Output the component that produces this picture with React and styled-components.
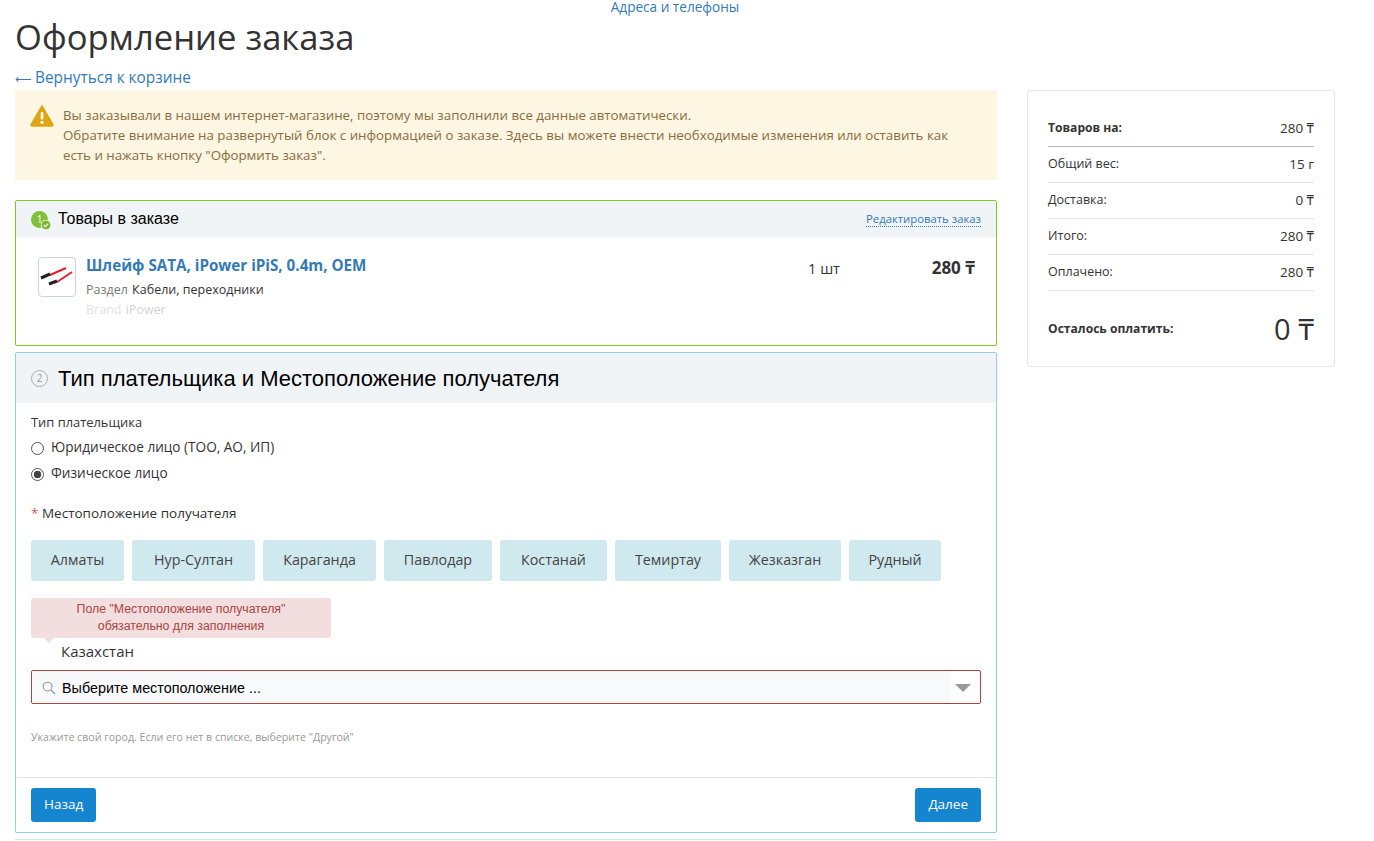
import React from 'react'
import styled, { createGlobalStyle } from 'styled-components'

const font = '"Open Sans", "Noto Sans", sans-serif'
const arial = '"Liberation Sans", Arial, sans-serif'

const cities = [
  { name: 'Алматы', width: 93 },
  { name: 'Нур-Султан', width: 123 },
  { name: 'Караганда', width: 113 },
  { name: 'Павлодар', width: 108 },
  { name: 'Костанай', width: 107 },
  { name: 'Темиртау', width: 106 },
  { name: 'Жезказган', width: 112 },
  { name: 'Рудный', width: 92 }
]

const totals = [
  { label: 'Товаров на:', value: '280 ₸', strong: true },
  { label: 'Общий вес:', value: '15 г' },
  { label: 'Доставка:', value: '0 ₸' },
  { label: 'Итого:', value: '280 ₸' },
  { label: 'Оплачено:', value: '280 ₸' }
]

export default function App() {
  return (
    <Page>
      <GlobalStyle />
      <TopLink>Адреса и телефоны</TopLink>
      <Title>Оформление заказа</Title>
      <BackLink>
        <i>⟵</i>Вернуться к корзине
      </BackLink>
      <Columns>
        <Main>
          <Alert>
            <svg width="24" height="22" viewBox="0 0 24 22">
              <path d="M12 1 L23 20 Q23 21 22 21 L2 21 Q1 21 1 20 Z" fill="#dfa512" stroke="#dfa512" strokeWidth="1.5" strokeLinejoin="round" />
              <rect x="10.7" y="7" width="2.6" height="7.5" rx="1" fill="#fff" />
              <circle cx="12" cy="17.3" r="1.6" fill="#fff" />
            </svg>
            <p>
              Вы заказывали в нашем интернет-магазине, поэтому мы заполнили все данные автоматически.
              <br />
              Обратите внимание на развернутый блок с информацией о заказе. Здесь вы можете внести необходимые изменения или оставить как есть и нажать кнопку "Оформить заказ".
            </p>
          </Alert>

          <Panel $color="#82c91e">
            <PanelHead $h={36}>
              <StepDone>
                1
                <svg width="10" height="10" viewBox="0 0 10 10">
                  <circle cx="5" cy="5" r="5" fill="#7ab833" stroke="#fff" strokeWidth="1" />
                  <path d="M2.8 5 L4.4 6.6 L7.2 3.6" fill="none" stroke="#fff" strokeWidth="1.2" />
                </svg>
              </StepDone>
              <SmallHeading>Товары в заказе</SmallHeading>
              <EditLink>Редактировать заказ</EditLink>
            </PanelHead>
            <Product>
              <Thumb>
                <svg width="36" height="38" viewBox="0 0 36 38">
                  <path d="M11 17 L27 10 M18 24 L33 14" stroke="#e4202e" strokeWidth="2" />
                  <path d="M2 20 L11 16 M10 26 L18 23" stroke="#222" strokeWidth="3.2" />
                </svg>
              </Thumb>
              <Info>
                <ProductName>Шлейф SATA, iPower iPiS, 0.4m, OEM</ProductName>
                <Prop>
                  <span>Раздел</span> Кабели, переходники
                </Prop>
                <Prop $faded>
                  <span>Brand</span> iPower
                </Prop>
              </Info>
              <Qty>1 шт</Qty>
              <Price>280 ₸</Price>
            </Product>
          </Panel>

          <Panel $color="#8fd0e2">
            <PanelHead $h={50}>
              <Step>2</Step>
              <BigHeading>Тип плательщика и Местоположение получателя</BigHeading>
            </PanelHead>
            <Form>
              <FieldLabel>Тип плательщика</FieldLabel>
              <RadioGroup>
                <RadioRow>
                  <Radio />
                  Юридическое лицо (ТОО, АО, ИП)
                </RadioRow>
                <RadioRow>
                  <Radio $checked />
                  Физическое лицо
                </RadioRow>
              </RadioGroup>
              <RequiredLabel>
                <i>*</i> Местоположение получателя
              </RequiredLabel>
              <Cities>
                {cities.map(city => (
                  <City key={city.name} $w={city.width}>
                    {city.name}
                  </City>
                ))}
              </Cities>
              <Tooltip>
                Поле "Местоположение получателя"
                <br />
                обязательно для заполнения
              </Tooltip>
              <Country>Казахстан</Country>
              <Select>
                <SelectInput>
                  <svg width="14" height="14" viewBox="0 0 14 14">
                    <circle cx="5.6" cy="5.6" r="4.4" fill="none" stroke="#999" strokeWidth="1.1" />
                    <path d="M9 9 L13 13" stroke="#999" strokeWidth="1.3" />
                  </svg>
                  Выберите местоположение ...
                </SelectInput>
                <Caret />
              </Select>
              <Hint>Укажите свой город. Если его нет в списке, выберите "Другой"</Hint>
            </Form>
            <PanelFoot>
              <Button>Назад</Button>
              <Button>Далее</Button>
            </PanelFoot>
          </Panel>
          <NextPanel />
        </Main>

        <Aside>
          {totals.map(row => (
            <TotalRow key={row.label} $strong={row.strong}>
              <TotalLabel $strong={row.strong}>{row.label}</TotalLabel>
              <span>{row.value}</span>
            </TotalRow>
          ))}
          <DueRow>
            <TotalLabel $strong>Осталось оплатить:</TotalLabel>
            <DueValue>0 ₸</DueValue>
          </DueRow>
        </Aside>
      </Columns>
    </Page>
  )
}

const GlobalStyle = createGlobalStyle`
  html, body {
    margin: 0;
    height: 841px;
    overflow: hidden;
    background: #fff;
  }

  body {
    font-family: ${font};
    font-size: 13px;
    color: #333;
  }

  p {
    margin: 0;
  }
`

const Page = styled.div`
  padding: 0 39px 0 15px;
`

const TopLink = styled.a`
  display: block;
  height: 14px;
  line-height: 13px;
  text-align: center;
  font-size: 13.6px;
  color: #337ab7;
`

const Title = styled.h1`
  margin: 0;
  height: 47px;
  line-height: 46px;
  font-size: 34.6px;
  font-weight: 400;
  color: #333;
`

const BackLink = styled.a`
  display: block;
  margin-top: 6px;
  height: 23px;
  line-height: 22px;
  font-size: 15.4px;
  color: #337ab7;

  i {
    display: inline-block;
    width: 20px;
    font-family: "DejaVu Sans", sans-serif;
    font-size: 11.5px;
    font-style: normal;
  }
`

const Columns = styled.div`
  display: flex;
  gap: 30px;
  align-items: flex-start;
`

const Main = styled.main`
  width: 982px;
  flex: none;
`

const Alert = styled.div`
  display: flex;
  gap: 9px;
  height: 90px;
  box-sizing: border-box;
  padding: 15px 30px 0 15px;
  margin-bottom: 20px;
  background: #fcf6e3;
  color: #8a6d3b;
  font-size: 13.3px;
  line-height: 20px;

  svg {
    flex: none;
  }
`

const Panel = styled.section`
  border: 1px solid ${p => p.$color};
  border-radius: 2px;
  margin-bottom: 6px;
`

const PanelHead = styled.header`
  display: flex;
  align-items: center;
  height: ${p => p.$h}px;
  padding: 0 15px;
  background: #f1f4f7;
`

const StepDone = styled.span`
  position: relative;
  display: flex;
  align-items: center;
  justify-content: center;
  width: 17px;
  height: 17px;
  margin-right: 10px;
  border-radius: 50%;
  background: #82bf3a;
  color: #fff;
  font-size: 10px;

  svg {
    position: absolute;
    right: -3px;
    bottom: -2px;
  }
`

const Step = styled.span`
  display: flex;
  align-items: center;
  justify-content: center;
  box-sizing: border-box;
  width: 17px;
  height: 17px;
  margin-right: 10px;
  border: 1px solid #aaa;
  border-radius: 50%;
  color: #999;
  font-size: 10px;
`

const SmallHeading = styled.h3`
  margin: 0;
  flex: 1;
  font-family: ${arial};
  font-size: 16px;
  font-weight: 400;
  color: #000;
`

const BigHeading = styled.h2`
  margin: 0;
  padding-top: 1px;
  font-family: ${arial};
  font-size: 22px;
  font-weight: 400;
  color: #000;
`

const EditLink = styled.a`
  font-size: 11.3px;
  line-height: 14px;
  color: #337ab7;
  border-bottom: 1px dotted #337ab7;
`

const Product = styled.div`
  display: flex;
  align-items: flex-start;
  height: 108px;
  box-sizing: border-box;
  padding: 20px 22px 0;
`

const Thumb = styled.div`
  display: flex;
  box-sizing: border-box;
  width: 38px;
  height: 40px;
  margin-right: 10px;
  border: 1px solid #ccd4dc;
  border-radius: 4px;
`

const Info = styled.div`
  flex: 1;
  margin-top: -3px;
`

const ProductName = styled.a`
  display: block;
  height: 22px;
  font-size: 15.2px;
  font-weight: 700;
  line-height: 22px;
  color: #337ab7;
`

const Prop = styled.div`
  margin-top: ${p => (p.$faded ? 2 : 5)}px;
  height: 18px;
  line-height: 18px;
  font-size: 12.5px;
  color: #333;
  ${p => p.$faded && 'opacity: 0.22;'}

  span {
    margin-right: 1px;
    color: #777;
  }
`

const Qty = styled.div`
  width: 107px;
  font-size: 14.6px;
  line-height: 22px;
`

const Price = styled.div`
  width: 60px;
  margin-right: -1px;
  white-space: nowrap;
  text-align: right;
  font-size: 17px;
  font-weight: 700;
  line-height: 22px;
  color: #333;
`

const Form = styled.div`
  height: 374px;
  box-sizing: border-box;
  padding: 10px 15px 0;
`

const FieldLabel = styled.div`
  height: 19px;
  line-height: 19px;
  font-size: 12.9px;
`

const RadioGroup = styled.div`
  padding-top: 1px;
`

const RadioRow = styled.label`
  display: flex;
  align-items: center;
  gap: 7px;
  height: 26px;
  font-size: 13.6px;
`

const Radio = styled.span`
  box-sizing: border-box;
  width: 13px;
  height: 13px;
  margin-top: 5px;
  border: 1px solid #555;
  border-radius: 50%;
  background: ${p => (p.$checked ? 'radial-gradient(circle, #444 0 3.5px, #fff 4px)' : '#fff')};
`

const RequiredLabel = styled.div`
  margin-top: 18px;
  height: 20px;
  line-height: 20px;
  font-size: 13.5px;

  i {
    color: #d9534f;
    font-style: normal;
  }
`

const Cities = styled.div`
  display: flex;
  gap: 8px;
  margin-top: 17px;
`

const City = styled.button`
  width: ${p => p.$w}px;
  height: 41px;
  padding: 0 0 3px;
  border: 0;
  border-radius: 3px;
  background: #cfe9ef;
  color: #444;
  font-family: ${font};
  font-size: 14.3px;
`

const Tooltip = styled.div`
  position: relative;
  width: 300px;
  height: 40px;
  margin-top: 17px;
  border-radius: 3px;
  background: #f2dede;
  color: #a94442;
  font-family: ${arial};
  font-size: 12.3px;
  line-height: 17px;
  text-align: center;
  box-sizing: border-box;
  padding-top: 3px;

  &::after {
    content: '';
    position: absolute;
    left: 13px;
    bottom: -5px;
    border: 5px solid transparent;
    border-bottom: 0;
    border-top-color: #f2dede;
  }
`

const Country = styled.div`
  height: 32px;
  line-height: 27px;
  padding-left: 30px;
  font-size: 15px;
`

const Select = styled.div`
  display: flex;
  height: 34px;
  box-sizing: border-box;
  border: 1px solid #b33f3f;
  border-radius: 2px;
`

const SelectInput = styled.div`
  flex: 1;
  display: flex;
  align-items: center;
  gap: 6px;
  padding-left: 10px;
  padding-top: 1px;
  background: #f8f9fb;
  color: #000;
  font-family: ${arial};
  font-size: 14.35px;
`

const Caret = styled.div`
  width: 30px;
  position: relative;

  &::after {
    content: '';
    position: absolute;
    left: 5px;
    top: 13px;
    border: 8px solid transparent;
    border-bottom: 0;
    border-top-color: #999;
  }
`

const Hint = styled.div`
  margin-top: 26px;
  font-size: 10.6px;
  line-height: 14px;
  color: #999;
`

const PanelFoot = styled.footer`
  display: flex;
  justify-content: space-between;
  height: 55px;
  padding: 10px 15px 0;
  box-sizing: border-box;
  border-top: 1px solid #e4e4e4;
`

const Button = styled.button`
  height: 34px;
  padding: 0 13px 2px;
  border: 0;
  border-radius: 3px;
  background: #1585d0;
  color: #fff;
  font-family: ${font};
  font-size: 13.5px;
`

const NextPanel = styled.div`
  height: 10px;
  border-top: 1px solid #cfe9ef;
`

const Aside = styled.aside`
  width: 308px;
  height: 277px;
  flex: none;
  box-sizing: border-box;
  padding: 20px 20px 0;
  border: 1px solid #e6e6e6;
  border-radius: 3px;
`

const TotalRow = styled.div`
  display: flex;
  justify-content: space-between;
  align-items: center;
  height: 36px;
  box-sizing: border-box;
  padding-bottom: 2px;
  border-bottom: 1px solid ${p => (p.$strong ? '#bbb' : '#e4e4e4')};
  font-size: 13.5px;
`

const TotalLabel = styled.span`
  font-size: ${p => (p.$strong ? 12.1 : 12.5)}px;
  font-weight: ${p => (p.$strong ? 700 : 400)};
`

const DueRow = styled.div`
  display: flex;
  justify-content: space-between;
  align-items: center;
  height: 74px;
`

const DueValue = styled.span`
  font-size: 29px;
  font-weight: 400;
`
